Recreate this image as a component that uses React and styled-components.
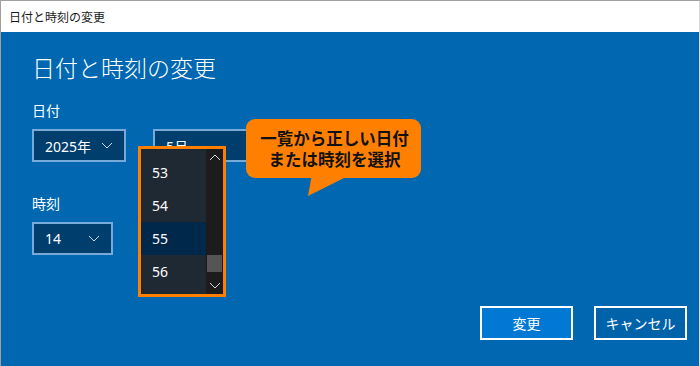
import React from 'react';
import styled, { createGlobalStyle } from 'styled-components';

const GlobalStyle = createGlobalStyle`
    html, body {
        margin: 0;
        padding: 0;
        width: 700px;
        height: 366px;
        overflow: hidden;
        font-family: "Noto Sans", "Noto Sans CJK JP", sans-serif;
    }
`;

const Window = styled.div`
    position: relative;
    width: 700px;
    height: 366px;
    box-sizing: border-box;
    display: flex;
    flex-direction: column;
    border-top: 1px solid #a0a0a0;
    border-left: 1px solid #a0a0a0;
    border-right: 1px solid #d8d8d8;
    background: #0067b0;
`;

const TitleBar = styled.div`
    height: 31px;
    flex-shrink: 0;
    background: #fff;
    display: flex;
    align-items: center;
    padding-left: 8px;
    font-size: 12px;
    color: #1a1a1a;
`;

const Body = styled.div`
    flex: 1;
    display: flex;
    flex-direction: column;
    padding: 20px 12px 26px 31px;
    color: #fff;
`;

const Heading = styled.h1`
    margin: 0;
    font-size: 23px;
    line-height: 32px;
    font-weight: 300;
`;

const Label = styled.div`
    font-size: 14px;
    line-height: 20px;
    margin-top: ${(p) => p.$top}px;
`;

const Row = styled.div`
    display: flex;
    gap: 27px;
    margin-top: 8px;
`;

const Select = styled.div`
    box-sizing: border-box;
    width: ${(p) => p.$w}px;
    height: 33px;
    background: #003e6e;
    border: 2px solid #76aad8;
    display: flex;
    align-items: center;
    justify-content: space-between;
    padding: 0 11px 0 11px;
    font-size: 14px;
`;

const Chevron = ({ up }) => (
    <svg width="12" height="7" viewBox="0 0 12 7">
        <polyline
            points={up ? '1,6 6,1 11,6' : '1,1 6,6 11,1'}
            fill="none"
            stroke="#d0d8e0"
            strokeWidth="1"
        />
    </svg>
);

const Buttons = styled.div`
    margin-top: auto;
    display: flex;
    justify-content: flex-end;
    gap: 21px;
`;

const Button = styled.button`
    box-sizing: border-box;
    width: 93px;
    height: 34px;
    border: 2px solid #fff;
    background: ${(p) => (p.$primary ? '#0078d4' : '#0063aa')};
    color: #fff;
    font-family: inherit;
    font-size: 14px;
`;

const Popup = styled.div`
    position: absolute;
    left: 137px;
    top: 145px;
    width: 88px;
    height: 151px;
    box-sizing: border-box;
    border: 3px solid #ff8000;
    background: #1f2934;
    display: flex;
    overflow: hidden;
`;

const List = styled.div`
    flex: 1;
    display: flex;
    flex-direction: column;
    padding-top: 7px;
`;

const Item = styled.div`
    height: 33px;
    flex-shrink: 0;
    display: flex;
    align-items: center;
    padding-left: 11px;
    font-size: 14px;
    color: #fff;
    background: ${(p) => (p.$selected ? '#00284a' : 'transparent')};
`;

const ScrollBar = styled.div`
    width: 17px;
    background: #1c1c1c;
    display: flex;
    flex-direction: column;
    align-items: center;
    justify-content: space-between;
    padding: 5px 0 5px;
    position: relative;
`;

const Thumb = styled.div`
    position: absolute;
    left: 1px;
    right: 1px;
    top: 106px;
    height: 17px;
    background: #555;
`;

const Callout = styled.div`
    position: absolute;
    left: 245px;
    top: 118px;
    width: 175px;
    height: 59px;
    box-sizing: border-box;
    background: #ff8000;
    border-radius: 9px;
    color: #111;
    font-weight: 700;
    font-size: 16.5px;
    line-height: 21px;
    display: flex;
    flex-direction: column;
    align-items: center;
    justify-content: center;
    padding-left: 2px;

    &::after {
        content: '';
        position: absolute;
        left: 62px;
        top: 58px;
        width: 38px;
        height: 19px;
        background: #ff8000;
        clip-path: polygon(9% 0, 100% 0, 0 100%);
    }
`;

const minutes = [53, 54, 55, 56];

export default function App() {
    return (
        <>
            <GlobalStyle />
            <Window>
                <TitleBar>日付と時刻の変更</TitleBar>
                <Body>
                    <Heading>日付と時刻の変更</Heading>
                    <Label $top={17}>日付</Label>
                    <Row>
                        <Select $w={94}>
                            2025年 <Chevron />
                        </Select>
                        <Select $w={110}>5月</Select>
                    </Row>
                    <Label $top={32}>時刻</Label>
                    <Row>
                        <Select $w={81}>
                            14 <Chevron />
                        </Select>
                    </Row>
                    <Buttons>
                        <Button $primary>変更</Button>
                        <Button>キャンセル</Button>
                    </Buttons>
                </Body>
                <Popup>
                    <List>
                        {minutes.map((m) => (
                            <Item key={m} $selected={m === 55}>
                                {m}
                            </Item>
                        ))}
                    </List>
                    <ScrollBar>
                        <Chevron up />
                        <Thumb />
                        <Chevron />
                    </ScrollBar>
                </Popup>
                <Callout>
                    <span>一覧から正しい日付</span>
                    <span>または時刻を選択</span>
                </Callout>
            </Window>
        </>
    );
}
